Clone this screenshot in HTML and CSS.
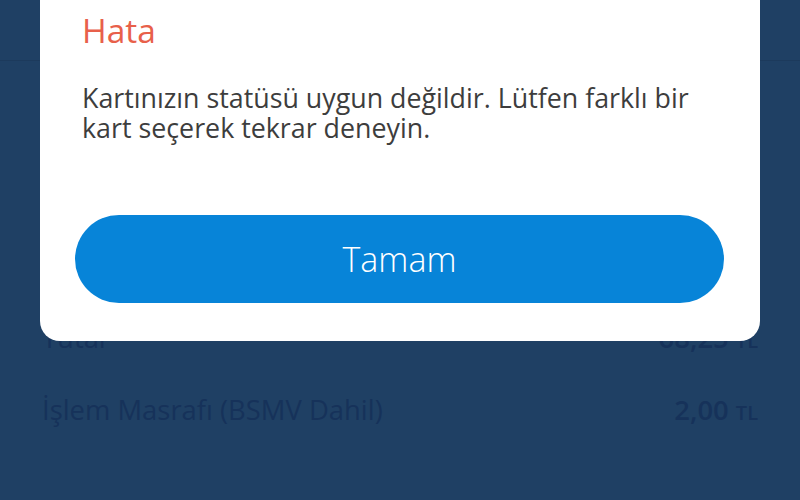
FILE: index.html
```html
<!DOCTYPE html>
<html lang="tr">
<head>
<meta charset="utf-8">
<link rel="stylesheet" href="styles.css">
</head>
<body>
<div class="page">
  <div class="header"></div>
  <div class="rows">
    <div class="row"><span class="label">Tutar</span><span class="amount">68,25 <small>TL</small></span></div>
    <div class="row"><span class="label">İşlem Masrafı (BSMV Dahil)</span><span class="amount">2,00 <small>TL</small></span></div>
  </div>
</div>
<div class="dialog">
  <h1 class="title">Hata</h1>
  <p class="message">Kartınızın statüsü uygun değildir. Lütfen farklı bir kart seçerek tekrar deneyin.</p>
  <button class="btn">Tamam</button>
</div>
</body>
</html>
```
FILE: styles.css
```css
html, body {
  margin: 0;
  padding: 0;
  width: 800px;
  height: 500px;
  overflow: hidden;
  background: #1f4064;
  font-family: "Open Sans", "Noto Sans", sans-serif;
}
.page {
  position: relative;
  height: 500px;
}
.header {
  height: 60px;
  border-bottom: 1px solid #1c3a5c;
}
.rows {
  padding: 258px 42px 0 42px;
}
.row {
  display: flex;
  justify-content: space-between;
  align-items: baseline;
  height: 72px;
  color: #16325a;
  font-size: 27.4px;
}
.amount {
  font-weight: 600;
}
.amount small {
  font-size: 20px;
}
.dialog {
  position: absolute;
  left: 40px;
  top: -20px;
  width: 720px;
  height: 361px;
  box-sizing: border-box;
  background: #ffffff;
  border-radius: 20px;
  padding: 0 36px 0 35px;
}
.title {
  margin: 0;
  padding: 30px 0 0 7px;
  font-size: 33.5px;
  line-height: 40px;
  font-weight: 400;
  color: #e8604a;
}
.message {
  margin: 0;
  padding: 32.5px 0 0 7px;
  font-size: 26.8px;
  line-height: 30px;
  color: #3d3d3d;
}
.btn {
  display: block;
  margin-top: 72px;
  width: 100%;
  height: 88px;
  border: none;
  border-radius: 44px;
  background: #0784d8;
  color: #ffffff;
  font-family: inherit;
  font-size: 34px;
  font-weight: 300;
}
```
